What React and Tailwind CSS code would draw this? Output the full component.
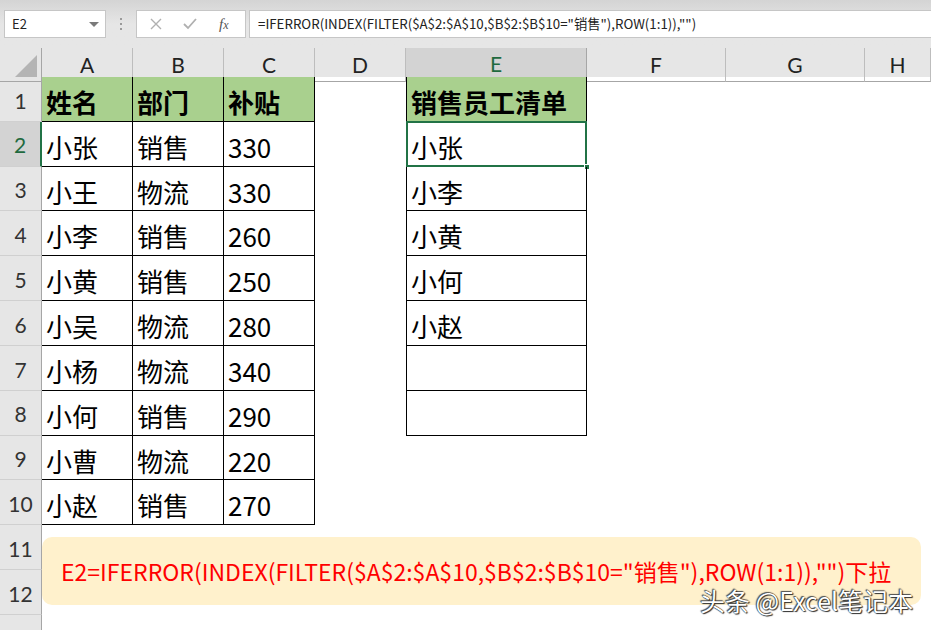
import React from 'react';

const COLS = ['A', 'B', 'C', 'D', 'E', 'F', 'G', 'H'];
const GRID = 'grid grid-cols-[42px_91px_91px_91px_91px_181px_139px_139px_1fr]';

const DATA = [
    ['姓名', '部门', '补贴'],
    ['小张', '销售', '330'],
    ['小王', '物流', '330'],
    ['小李', '销售', '260'],
    ['小黄', '销售', '250'],
    ['小吴', '物流', '280'],
    ['小杨', '物流', '340'],
    ['小何', '销售', '290'],
    ['小曹', '物流', '220'],
    ['小赵', '销售', '270'],
];

const LIST = ['销售员工清单', '小张', '小李', '小黄', '小何', '小赵', '', ''];

const FORMULA = '=IFERROR(INDEX(FILTER($A$2:$A$10,$B$2:$B$10="销售"),ROW(1:1)),"")';

const cjk = { fontFamily: '"Noto Sans CJK SC", "Microsoft YaHei", sans-serif' };
const head = { fontFamily: 'Lato, "Liberation Sans", sans-serif' };

function FormulaBar() {
    return (
        <div className="flex h-[48px] items-start bg-gradient-to-b from-[#d4d4d4] via-[#e6e6e6] to-[#e6e6e6] pt-[10px]">
            <div className="ml-[4px] flex h-[28px] w-[102px] items-center justify-between border border-[#c6c6c6] bg-white pl-[7px] pr-[6px] text-[13px] text-[#222]" style={cjk}>
                <span>E2</span>
                <span className="h-0 w-0 border-x-[5px] border-t-[5px] border-x-transparent border-t-[#7a7a7a]" />
            </div>
            <div className="flex w-[30px] flex-col items-center justify-center gap-[3px] pt-[8px]">
                <span className="h-[2px] w-[2px] bg-[#9a9a9a]" />
                <span className="h-[2px] w-[2px] bg-[#9a9a9a]" />
                <span className="h-[2px] w-[2px] bg-[#9a9a9a]" />
            </div>
            <div className="flex h-[28px] w-[110px] items-center border border-[#c6c6c6] bg-white">
                <svg width="12" height="12" viewBox="0 0 12 12" className="ml-[13px]">
                    <path d="M1 1L11 11M11 1L1 11" stroke="#b0b0b0" strokeWidth="1.4" />
                </svg>
                <svg width="14" height="12" viewBox="0 0 14 12" className="ml-[21px]">
                    <path d="M1 6L5 10L13 1" stroke="#b0b0b0" strokeWidth="1.8" fill="none" />
                </svg>
                <span className="ml-[22px] text-[15px] italic text-[#555]" style={{ fontFamily: '"Liberation Serif", serif' }}>
                    f<span className="text-[12px]">x</span>
                </span>
            </div>
            <div className="ml-[3px] flex h-[28px] flex-1 items-center border-y border-l border-[#c6c6c6] bg-white pl-[8px] text-[13.3px] text-[#222]" style={cjk}>
                {FORMULA}
            </div>
        </div>
    );
}

function HeaderRow() {
    return (
        <div className={`${GRID} h-[29px] bg-[#e6e6e6]`} style={head}>
            <div className="relative border-r border-b border-[#a6a6a6]">
                <svg width="22" height="22" viewBox="0 0 22 22" className="absolute right-[4px] bottom-[4px]">
                    <path d="M22 0L22 22L0 22Z" fill="#b4b4b4" />
                </svg>
            </div>
            {COLS.map((c) => {
                const sel = c === 'E';
                return (
                    <div
                        key={c}
                        className={`flex items-center justify-center border-r text-[21px] ${sel ? 'border-b-2 border-b-[#217346] border-r-[#a6a6a6] bg-[#d3d3d3] text-[#1f6a3f]' : 'border-b border-[#bdbdbd] border-b-[#a6a6a6] text-[#222]'}`}
                    >
                        {c}
                    </div>
                );
            })}
        </div>
    );
}

function Row({ r }) {
    const idx = r - 1;
    const data = idx < DATA.length ? DATA[idx] : null;
    const list = idx < LIST.length ? LIST[idx] : null;
    const isHead = r === 1;
    const selRow = r === 2;

    const cellText = (txt) => (
        <span className={`pl-[4px] pt-[6px] text-[26px] leading-none text-black ${isHead ? 'font-bold' : ''}`}>{txt}</span>
    );

    return (
        <div className={`${GRID} h-[44.83px]`}>
            <div
                className={`flex items-center justify-center border-b border-[#d0d0d0] pt-[3px] text-[21px] ${selRow ? 'border-r-2 border-r-[#217346] bg-[#d3d3d3] text-[#1f6a3f]' : 'border-r border-r-[#a6a6a6] bg-[#e6e6e6] text-[#333]'}`}
                style={head}
            >
                {r <= 12 ? r : ''}
            </div>
            {[0, 1, 2].map((c) => (
                <div
                    key={c}
                    className={`flex items-center ${data ? `border-r border-b border-black ${isHead ? 'bg-[#a9d08e]' : ''}` : ''}`}
                    style={cjk}
                >
                    {data && cellText(data[c])}
                </div>
            ))}
            <div />
            <div
                className={`relative flex items-center ${list !== null ? `border-x border-b border-black ${isHead ? 'bg-[#a9d08e]' : ''}` : ''}`}
                style={cjk}
            >
                {list !== null && cellText(list)}
                {selRow && (
                    <>
                        <span className="pointer-events-none absolute -top-[1px] -left-[1px] -right-[1px] -bottom-[1px] border-2 border-[#217346]" />
                        <span className="absolute -right-[4px] -bottom-[4px] h-[6px] w-[6px] border border-white bg-[#217346]" />
                    </>
                )}
            </div>
            <div />
            <div />
            <div />
        </div>
    );
}

export default function App() {
    const rows = Array.from({ length: 13 }, (_, i) => i + 1);
    return (
        <div className="relative h-[630px] w-[931px] overflow-hidden bg-white">
            <FormulaBar />
            <HeaderRow />
            {rows.map((r) => (
                <Row key={r} r={r} />
            ))}
            <div
                className="absolute left-[42px] top-[537px] flex h-[68px] w-[879px] items-center rounded-[10px] bg-[#fff1cc] pl-[19px] text-[23px] text-[#ff0000]"
                style={cjk}
            >
                E2=IFERROR(INDEX(FILTER($A$2:$A$10,$B$2:$B$10="销售"),ROW(1:1)),"")下拉
            </div>
            <div
                className="absolute left-[700px] top-[582px] text-[25px] text-white"
                style={{ ...cjk, textShadow: '0 0 1px #000, 1px 1px 1px #333, -1px -1px 1px #555' }}
            >
                头条 @Excel笔记本
            </div>
        </div>
    );
}
